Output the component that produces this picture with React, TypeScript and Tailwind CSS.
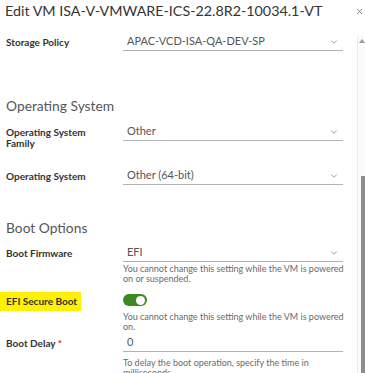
import { ChevronDown, X } from "lucide-react";

const font = { fontFamily: "Lato, 'Open Sans', sans-serif" };

const Select = ({ value }: { value: string }) => (
  <div className="flex h-[18px] items-center justify-between border-b border-[#b3b3b3] pl-[4px] pr-[4px]">
    <span className="text-[11px] text-[#565656]">{value}</span>
    <ChevronDown className="size-[10px] text-[#8c8c8c]" strokeWidth={2} />
  </div>
);

const Help = ({ children, className = "mt-[2px]" }: { children: React.ReactNode; className?: string }) => (
  <p className={`w-[225px] text-[9px] leading-[10px] text-[#6a6a6a] ${className}`}>{children}</p>
);

const Row = ({
  label,
  children,
  className = "",
}: {
  label: React.ReactNode;
  children: React.ReactNode;
  className?: string;
}) => (
  <div className={`grid grid-cols-[117px_220px] ${className}`}>
    <div className="pt-[4px] text-[10px] font-bold leading-[11px] text-[#333]">{label}</div>
    <div>{children}</div>
  </div>
);

export default function App() {
  return (
    <div className="h-[373px] w-[365px] overflow-hidden bg-white" style={font}>
      <div className="flex h-[22px] items-center justify-between pl-[5px] pr-[1px]">
        <h1 className="whitespace-nowrap text-[14.3px] leading-[20px] text-[#333]">
          Edit VM ISA-V-VMWARE-ICS-22.8R2-10034.1-VT
        </h1>
        <X className="size-[9px] text-[#666]" strokeWidth={2} />
      </div>

      <div className="mt-[14px] flex">
        <div className="w-[357px] pl-[6px]">
          <Row label="Storage Policy" className="mt-[-3px]">
            <Select value="APAC-VCD-ISA-QA-DEV-SP" />
          </Row>

          <h2 className="mt-[46px] text-[13.8px] leading-[18px] text-[#565656]">Operating System</h2>

          <Row label={<>Operating System<br />Family</>} className="mt-[8px]">
            <Select value="Other" />
          </Row>

          <Row label="Operating System" className="mt-[18px]">
            <Select value="Other (64-bit)" />
          </Row>

          <h2 className="mt-[34px] text-[13.8px] leading-[18px] text-[#565656]">Boot Options</h2>

          <Row label="Boot Firmware" className="mt-[7px]">
            <Select value="EFI" />
            <Help>You cannot change this setting while the VM is powered on or suspended.</Help>
          </Row>

          <Row
            label={
              <span className="-ml-[6px] -mt-[5px] inline-block bg-[#fff200] py-[4px] pl-[6px] pr-[4px]">
                EFI Secure Boot
              </span>
            }
            className="mt-[8px]"
          >
            <div className="flex h-[16px] items-center">
              <div className="flex h-[12px] w-[24px] items-center justify-end rounded-full bg-[#3c8a1f] pr-[2px]">
                <div className="size-[9px] rounded-full bg-white" />
              </div>
            </div>
            <Help className="mt-[4px]">You cannot change this setting while the VM is powered on.</Help>
          </Row>

          <Row
            label={
              <>
                Boot Delay <span className="text-[#e02020]">*</span>
              </>
            }
            className="mt-[2px]"
          >
            <div className="flex h-[18px] items-center border-b border-[#b3b3b3] pl-[4px]">
              <span className="text-[11px] text-[#565656]">0</span>
            </div>
            <Help className="mt-[6px]">To delay the boot operation, specify the time in milliseconds.</Help>
          </Row>
        </div>

        <div className="flex h-[337px] w-[8px] flex-col border-l border-[#ececec] bg-[#fafafa]">
          <div className="flex h-[10px] items-center justify-center">
            <div className="h-0 w-0 border-x-[3px] border-b-[4px] border-x-transparent border-b-[#9a9a9a]" />
          </div>
          <div className="flex-1" />
          <div className="ml-auto h-[197px] w-[4px] bg-[#8e8e8e]" />
        </div>
      </div>
    </div>
  );
}
